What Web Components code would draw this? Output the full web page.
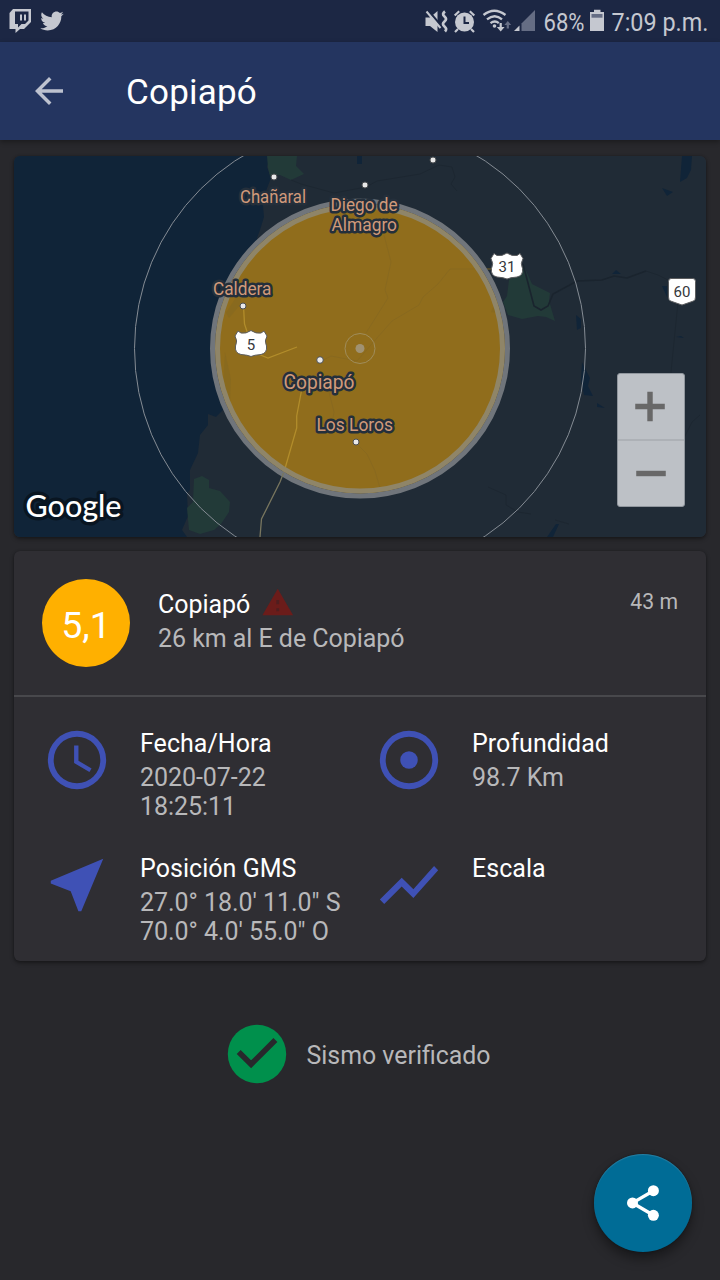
<!DOCTYPE html>
<html lang="es">
<head>
<meta charset="utf-8">
<title>Copiapó</title>
<style>
html,body{margin:0;height:100%;background:#28282c;font-family:Roboto,sans-serif;color:#b8b8ba}
</style>
</head>
<body>
<quake-screen></quake-screen>
<script>
const define = (name, css, html) => customElements.define(name, class extends HTMLElement {
  constructor() {
    super();
    this.attachShadow({mode: 'open'}).innerHTML = `<style>*{box-sizing:border-box}${css}</style>${html}`;
  }
});

define('status-bar', `
:host{display:block;height:42px;background:#1c2744;color:#c5c8d0}
svg{display:block;font-family:Roboto,sans-serif}`, `
<svg width="720" height="42" viewBox="0 0 720 42" fill="currentColor">
<path fill-rule="evenodd" d="M13 9H31V22L24 29H20L15.500 33V29H9.500V13ZM15 11.500V24H18V27.500L21.500 24H25L28.500 20.500V11.500ZM20 14.500H22V20.500H20ZM24 14.500H26V20.500H24Z"/>
<path transform="translate(40.300 9.200) scale(.975)" d="M23.954 4.569c-.885.389-1.830.654-2.825.775 1.014-.611 1.794-1.574 2.163-2.723-.951.555-2.005.959-3.127 1.184-.896-.959-2.173-1.559-3.591-1.559-2.717 0-4.920 2.203-4.920 4.917 0 .390.045.765.127 1.124C7.691 8.094 4.066 6.130 1.640 3.161c-.427.722-.666 1.561-.666 2.475 0 1.710.870 3.213 2.188 4.096-.807-.026-1.566-.248-2.228-.616v.061c0 2.385 1.693 4.374 3.946 4.827-.413.111-.849.171-1.296.171-.314 0-.615-.030-.916-.086.631 1.953 2.445 3.377 4.604 3.417-1.680 1.319-3.809 2.105-6.102 2.105-.390 0-.779-.023-1.170-.067 2.189 1.394 4.768 2.209 7.557 2.209 9.054 0 13.999-7.496 13.999-13.986 0-.209 0-.420-.015-.630.961-.689 1.800-1.560 2.460-2.548z"/>
<g><path d="M425.500 17.500H430L437.500 11V32L430 26H425.500Z"/><path d="M427.500 9.800L442 27" stroke="#1c2744" stroke-width="2.500"/><path d="M426.500 11.500L440.500 28" stroke="currentColor" stroke-width="2"/><path d="M445 11.500q-3.500 2.500-.5 5t0 5t0 5t.5 5" fill="none" stroke="currentColor" stroke-width="2.800"/></g>
<g><circle cx="464.500" cy="22" r="9.500"/><path d="M458 29l-3 3M471 29l3 3M454.700 15.500l4.500-4.300M474.300 15.500l-4.500-4.300" stroke="currentColor" stroke-width="2.200"/><path d="M464.500 16.500V23H469" stroke="#1c2744" stroke-width="2" fill="none"/></g>
<g fill="none" stroke="currentColor" stroke-width="2.300"><path d="M483.500 15q10.700-8.600 22 0M487 19.400q7.800-6.400 15 0M490.500 23.200q4.400-3.400 8.300 0"/></g><circle cx="494.500" cy="26" r="1.800"/>
<path d="M499.600 23h2.200v4h2.800l-3.900 4.500-3.900-4.500h2.800z"/><path fill="#656d84" d="M506.700 28.500h2.200v-3.500h2.300L507.800 21l-3.400 4h2.300z"/>
<path fill="#656d84" d="M535 10V31H521.500V23.500Z"/><path d="M519.500 25.500V31H514Z"/>
<text x="543.500" y="31" font-size="26.500" textLength="41" lengthAdjust="spacingAndGlyphs">68%</text>
<path d="M594 9.700H600.500V12H604V31H590V12H594Z"/><path fill="#656d84" d="M591.500 14H602.500V17.700H591.500Z"/>
<text x="611.500" y="31" font-size="26.500" textLength="97" lengthAdjust="spacingAndGlyphs">7:09 p.m.</text>
</svg>`);

define('app-bar', `
:host{display:flex;align-items:center;height:98px;background:#243560;box-shadow:0 2px 5px #0005;padding:0 28px}
svg{display:block;width:42px;height:42px;fill:#bdc2cf}
h1{margin:3px 0 0 56px;font:400 35px/42px Roboto,sans-serif;letter-spacing:.2px;color:#fff}`, `
<svg viewBox="0 0 24 24"><path d="M20 11H7.830l5.590-5.590L12 4l-8 8 8 8 1.410-1.410L7.830 13H20v-2z"/></svg><h1><slot></slot></h1>`);

define('zoom-control', `
:host{display:flex;flex-direction:column;width:68px;height:134px;border:1px solid #90969d;border-radius:3px;background:#bdc1c6}
svg{display:block;flex:1;min-height:0;width:66px;stroke:#686868;stroke-width:5.500}
svg+svg{border-top:2px solid #adb1b6}`, `
<svg viewBox="0 0 66 66"><path d="M17 33H47M32 18V48"/></svg>
<svg viewBox="0 0 66 66"><path d="M18 33H48"/></svg>`);

define('quake-map', `
:host{display:block;position:relative;height:381px;border-radius:6px;overflow:hidden;background:#202b36}
svg{display:block;font-family:Roboto,sans-serif}
zoom-control{position:absolute;right:21px;bottom:30px}
.l text{fill:#d19a7a;font-size:18px;stroke:#242f3b;stroke-width:5px;stroke-linejoin:round;paint-order:stroke}
.n{fill:#35373b;font-size:15px}
.g{fill:#fff;font:500 31px Lato,sans-serif;stroke:#091521;stroke-width:7px;stroke-linejoin:round;paint-order:stroke}`, `
<svg width="692" height="381" viewBox="14 156 692 381">
<path fill="#102438" d="M14 156H270L267 167 271 178 266 191 263 206 264 217 260 230 257 238 262 248 253 270 247 280 240 288 237 306 229 318 226 330 228 342 225 353 230 367 229 389 224 409 216 417 208 414 208 425 200 435 198 453 190 470 190 490 187 493 188 516 182 530 187 537H14Z"/>
<g fill="#223a38"><path d="M267 156H297L296 166 304 174 291 180 280 175 270 176 268 168Z"/><path d="M194 479L202 476 209 480 209 488 220 491 230 502 229 512 221 524 214 530 200 534 189 530 187 508 193 502Z"/><path d="M509 280L524 266 532 284 550 293 549 301 555 321 546 317 538 316 522 319 508 315 503 302 507 296Z"/></g>
<g fill="#102438"><path d="M357 156h5v8h-5zM682 156h10l-1 14-4 8-7 4zM662 188l11 4-6 4zM576 315l5 4v9l-4 2zM612 274l4-4 5 4zM662 286h5v11zM582 362l8 16-2 8 5 10-9-1-3-15zM597 403l8 5-8-1zM556 524h3l-6 13h-6zM676 337l5-1 3 2z"/></g>
<g fill="none" stroke="#1c2630" stroke-width=".8"><path d="M291 180l10 4 33 9 32-6 11-6 43-7 19-9 13 2 3 10-4 7 6 7"/><path stroke="#1a242e" stroke-width="1.600" d="M523 264l11 42 7 4 7-4 5-12 24-13 25-1 12-4 13 2 19-7"/><path d="M646 271l12 4 12 6M678 302l-7 70 1 12-5 12 7 28 10 14 8-16 8-7M488 487l18 8v10l12 7 13 2M555 520l14 4"/></g>
<circle cx="360" cy="348.500" r="145" fill="#906d1c"/>
<g fill="#846820" opacity=".55"><path d="M247 282L235 299 226 313 229 318 240 305 243 287ZM225 352L231 379 230 404 223 388ZM499 293L491 312 497 313Z"/></g>
<g fill="none" stroke="#88691f" stroke-width=".9"><path d="M505 269H450l-12 15-15 13-4 8-27 16-15 17-20 23-26-5-15 8M384 235l7 27-6 28 3 8-22 35M329 392l5 20-2 12M356 443l11 11 8 17 5 17"/></g>
<path fill="none" stroke="#b28d2b" stroke-width="1.300" d="M243.500 306l1 18 3 9M258 354l10 4 29-11M302 388l-5.300 28v12l-13 45"/>
<circle cx="360" cy="348.500" r="147.500" fill="none" stroke="#70757b" stroke-width="5"/><circle cx="360" cy="348.500" r="142.500" fill="none" stroke="#8f8568" stroke-width="5"/>
<path fill="none" stroke="#78765f" stroke-width="1.300" d="M283.500 473l-3.500 9-18.500 37-1.500 18"/>
<circle cx="360" cy="348.500" r="225.500" fill="none" stroke="#858c94"/>
<circle cx="360" cy="348.500" r="15" fill="none" stroke="#a08d5b"/><circle cx="360" cy="348.500" r="4.500" fill="#a09272"/>
<g fill="#e9e9e9" stroke="#4b4e51" stroke-width="1"><circle cx="274" cy="177" r="3"/><circle cx="365" cy="185" r="3"/><circle cx="433" cy="160" r="3"/><circle cx="243" cy="306" r="3"/><circle cx="320" cy="360" r="3.300"/><circle cx="356" cy="442" r="3"/></g>
<g class="l"><text x="240" y="203" textLength="66" lengthAdjust="spacingAndGlyphs">Chañaral</text><text x="330.500" y="211" textLength="67" lengthAdjust="spacingAndGlyphs">Diego de</text><text x="331.500" y="231" textLength="65.500" lengthAdjust="spacingAndGlyphs">Almagro</text><text x="213" y="295" textLength="58.500" lengthAdjust="spacingAndGlyphs">Caldera</text><text x="283.500" y="389" style="font-size:20px" textLength="71" lengthAdjust="spacingAndGlyphs">Copiapó</text><text x="316.500" y="431" textLength="76.500" lengthAdjust="spacingAndGlyphs">Los Loros</text></g>
<g fill="#fff" stroke="#5c5d5f" stroke-width="1"><path d="M494 253.500l3 2q5 1 10-2.500 5 3.500 10 2.500l3-2 3 5q-3 5-.5 10 1 7-5.500 8.500-7 .5-10 2-3-1.500-10-2-6.500-1.500-5.500-8.500 2.500-5-.5-10z"/><path transform="translate(-256 77.500)" d="M494 253.500l3 2q5 1 10-2.500 5 3.500 10 2.500l3-2 3 5q-3 5-.5 10 1 7-5.500 8.500-7 .5-10 2-3-1.500-10-2-6.500-1.500-5.500-8.500 2.500-5-.5-10z"/><path d="M671 278.500H693q2.500 0 2.500 3V297q0 3-2 4l-11.500 4-11.500-4q-2-1-2-4V281.500q0-3 2.500-3Z"/></g>
<g class="n" text-anchor="middle"><text x="507" y="272">31</text><text x="251" y="349.500">5</text><text x="682" y="297">60</text></g>
<text class="g" x="25.500" y="516.500" textLength="96" lengthAdjust="spacingAndGlyphs">Google</text>
</svg><zoom-control></zoom-control>`);

define('quake-card', `:host{display:block;border-radius:6px;background:#2f2e33;box-shadow:0 2px 4px #0006,0 0 2px #0003}`, `<slot></slot>`);

define('quake-header', `
:host{display:flex;height:146px;padding:28px 28px 0;border-bottom:2px solid #48484c}
.m{width:88px;height:88px;border-radius:50%;background:#ffb000;color:#fff;font-size:37.500px;line-height:92px;text-align:center;flex:none}
.t{flex:1;padding:11px 0 0 28px;font-size:25px;line-height:30px;letter-spacing:-.05px}
.r{display:flex;color:#fff;margin-bottom:4px}
svg{width:33.500px;height:33.500px;margin:-4px 0 -3px 11px}
.w{font-size:21.200px;line-height:26px;padding-top:10px}`, `
<div class="m"><slot name="magnitude"></slot></div>
<div class="t"><div class="r"><slot name="place"></slot><svg viewBox="0 0 24 24"><path fill="#6b1c1a" d="M1 21h22L12 2z"/><path fill="#4f1e1f" d="M11 10h2v3h-2zM11 16h2v2h-2z"/></svg></div><slot name="detail"></slot></div>
<div class="w"><slot name="ago"></slot></div>`);

const icons = {
  clock: '<path d="M12 2a10 10 0 1 0 0 20 10 10 0 1 0 0-20zm0 18a8 8 0 1 1 0-16 8 8 0 1 1 0 16z"/><path d="M12.500 7H11v6l5.250 3.150.75-1.230-4.500-2.670z"/>',
  depth: '<path d="M12 2a10 10 0 1 0 0 20 10 10 0 1 0 0-20zm0 18a8 8 0 1 1 0-16 8 8 0 1 1 0 16z"/><circle cx="12" cy="12" r="3"/>',
  position: '<path d="M21 3L3 10.530v.980l6.840 2.650L12.480 21h.980L21 3z"/>',
  scale: '<path d="M3.500 18.490l6-6.010 4 4L22 6.920l-1.410-1.410-7.090 7.970-4-4L2 16.990z"/>'
};
customElements.define('quake-fact', class extends HTMLElement {
  constructor() {
    super();
    this.attachShadow({mode: 'open'}).innerHTML = `<style>
:host{display:flex;gap:28px;font-size:25px;line-height:29px}
svg{display:block;width:70px;height:70px;fill:#3f51b5;flex:none}
.t{padding-top:4px;white-space:pre-line;letter-spacing:-.05px}
.h{color:#fff;margin-bottom:5px;letter-spacing:.04px}</style>
<svg viewBox="0 0 24 24">${icons[this.getAttribute('icon')]}</svg><div class="t"><div class="h"><slot name="title"></slot></div><slot></slot></div>`;
  }
});

define('quake-facts', `:host{display:grid;grid-template-columns:332px 332px;grid-template-rows:125px 111px;padding:28px 0 0 28px}`, `<slot></slot>`);

define('verified-note', `
:host{display:flex;align-items:center;justify-content:center;height:70px;gap:14px;font-size:24.900px;line-height:30px}
svg{display:block;width:70px;height:70px}
span{padding-top:3px}`, `
<svg viewBox="222 1019 70 70"><circle cx="257" cy="1054" r="29.200" fill="#00904c"/><path d="M238.700 1052L251.100 1064.300 275.400 1040" fill="none" stroke="#28282c" stroke-width="5.600"/></svg><span><slot></slot></span>`);

define('share-button', `
:host{display:block;width:98px;height:98px;border-radius:50%;background:#006c96;box-shadow:0 7px 12px #0006,0 0 3px #0004,inset 0 1px 1px #4d92af80}
svg{display:block}`, `
<svg width="98" height="98" viewBox="594 1154 98 98" fill="#fff"><path d="M653.500 1190.700L632.500 1202.900L653.500 1215.300" fill="none" stroke="#fff" stroke-width="3.400"/><circle cx="632.500" cy="1202.900" r="5.500"/><circle cx="653.400" cy="1190.700" r="5.500"/><circle cx="653.400" cy="1215.300" r="5.500"/></svg>`);

define('quake-screen', `
:host{display:flex;flex-direction:column;position:relative;width:720px;height:1280px;background:#28282c;overflow:hidden}
main{display:flex;flex-direction:column;gap:14px;padding:16px 14px 0}
.info{height:410px}
verified-note{margin:44px 7px 0 0}
share-button{position:absolute;right:28px;bottom:28px}`, `
<status-bar></status-bar>
<app-bar>Copiapó</app-bar>
<main>
<quake-card><quake-map></quake-map></quake-card>
<quake-card class="info">
<quake-header><span slot="magnitude">5,1</span><span slot="place">Copiapó</span><span slot="detail">26 km al E de Copiapó</span><span slot="ago">43 m</span></quake-header>
<quake-facts>
<quake-fact icon="clock"><span slot="title">Fecha/Hora</span>2020-07-22<br>18:25:11</quake-fact>
<quake-fact icon="depth"><span slot="title">Profundidad</span>98.7 Km</quake-fact>
<quake-fact icon="position"><span slot="title">Posición GMS</span>27.0° 18.0' 11.0" S<br>70.0° 4.0' 55.0" O</quake-fact>
<quake-fact icon="scale"><span slot="title">Escala</span></quake-fact>
</quake-facts>
</quake-card>
<verified-note>Sismo verificado</verified-note>
</main>
<share-button></share-button>`);
</script>
</body>
</html>
